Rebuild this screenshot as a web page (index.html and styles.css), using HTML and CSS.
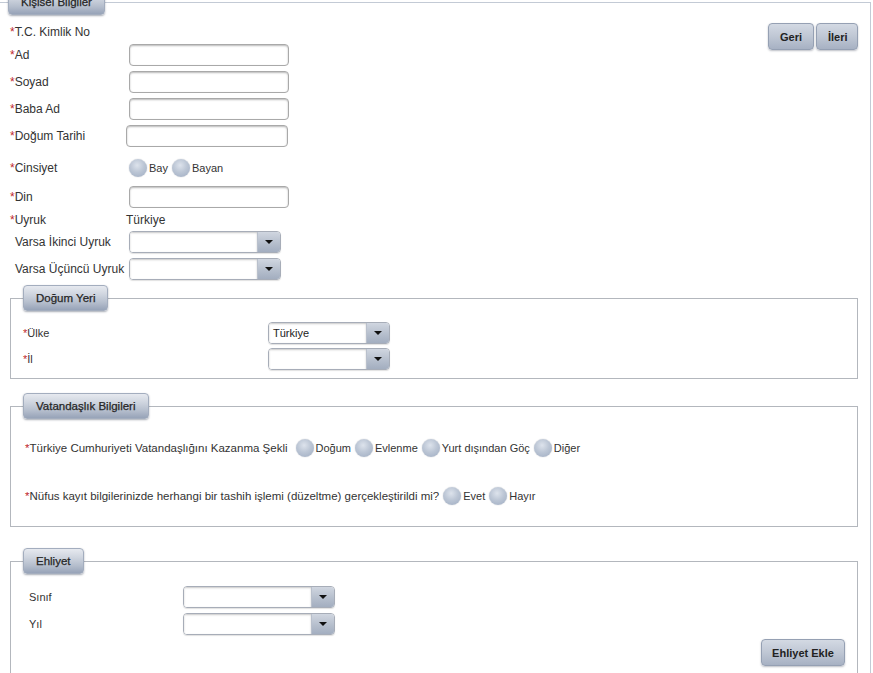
FILE: index.html
```html
<!DOCTYPE html>
<html lang="tr">
<head>
<meta charset="utf-8">
<title>Kişisel Bilgiler</title>
<link rel="stylesheet" href="styles.css">
</head>
<body>
<fieldset class="main">
  <legend class="tab tab-main">Kişisel Bilgiler</legend>
  <div class="top">
    <div class="rows">
      <div class="row r-tc"><span class="lbl"><i>*</i>T.C. Kimlik No</span></div>
      <div class="row"><span class="lbl"><i>*</i>Ad</span><input class="txt" type="text"></div>
      <div class="row"><span class="lbl"><i>*</i>Soyad</span><input class="txt" type="text"></div>
      <div class="row"><span class="lbl"><i>*</i>Baba Ad</span><input class="txt" type="text"></div>
      <div class="row"><span class="lbl"><i>*</i>Doğum Tarihi</span><input class="txt shift wide" type="text"></div>
      <div class="row r-cins"><span class="lbl"><i>*</i>Cinsiyet</span>
        <span class="opts"><span class="radio"></span><span class="opt">Bay</span><span class="radio"></span><span class="opt">Bayan</span></span>
      </div>
      <div class="row"><span class="lbl"><i>*</i>Din</span><input class="txt" type="text"></div>
      <div class="row r-uy"><span class="lbl"><i>*</i>Uyruk</span><span class="val shift">Türkiye</span></div>
      <div class="row"><span class="lbl ind">Varsa İkinci Uyruk</span><div class="sel w152"><div class="sv"></div><div class="sa"><b></b></div></div></div>
      <div class="row"><span class="lbl ind">Varsa Üçüncü Uyruk</span><div class="sel w152"><div class="sv"></div><div class="sa"><b></b></div></div></div>
    </div>
    <div class="nav"><button class="btn">Geri</button><button class="btn">İleri</button></div>
  </div>

  <fieldset class="sub dogum">
    <legend class="tab">Doğum Yeri</legend>
    <div class="srow first"><span class="slbl w245"><i>*</i>Ülke</span><div class="sel w122"><div class="sv">Türkiye</div><div class="sa"><b></b></div></div></div>
    <div class="srow"><span class="slbl w245"><i>*</i>İl</span><div class="sel w122"><div class="sv"></div><div class="sa"><b></b></div></div></div>
  </fieldset>

  <fieldset class="sub vat">
    <legend class="tab">Vatandaşlık Bilgileri</legend>
    <div class="qrow q1"><span class="q"><i>*</i>Türkiye Cumhuriyeti Vatandaşlığını Kazanma Şekli</span>
      <span class="radio"></span><span class="opt">Doğum</span>
      <span class="radio"></span><span class="opt">Evlenme</span>
      <span class="radio"></span><span class="opt">Yurt dışından Göç</span>
      <span class="radio"></span><span class="opt">Diğer</span>
    </div>
    <div class="qrow q2"><span class="q"><i>*</i>Nüfus kayıt bilgilerinizde herhangi bir tashih işlemi (düzeltme) gerçekleştirildi mi?</span>
      <span class="radio"></span><span class="opt">Evet</span>
      <span class="radio"></span><span class="opt">Hayır</span>
    </div>
  </fieldset>

  <fieldset class="sub ehl">
    <legend class="tab">Ehliyet</legend>
    <div class="srow first"><span class="slbl w160 pad6">Sınıf</span><div class="sel w152"><div class="sv"></div><div class="sa"><b></b></div></div></div>
    <div class="srow gap5"><span class="slbl w160 pad6">Yıl</span><div class="sel w152"><div class="sv"></div><div class="sa"><b></b></div></div></div>
    <div class="actions"><button class="btn btn-add">Ehliyet Ekle</button></div>
  </fieldset>
</fieldset>
</body>
</html>
```

FILE: styles.css
```css
html, body {
  margin: 0;
  padding: 0;
  background: #fff;
}
body {
  font-family: "Liberation Sans", Arial, sans-serif;
  font-size: 12px;
  color: #333;
  overflow: hidden;
}
i {
  font-style: normal;
  color: #c0282d;
}

/* outer fieldset */
.main {
  box-sizing: border-box;
  width: 872px;
  margin: -11px 0 0 -1px;
  padding: 0 12px 0 10px;
  border: 1px solid #c3cad5;
  min-inline-size: 0;
}

.tab {
  box-sizing: border-box;
  height: 26px;
  line-height: 25px;
  padding: 0 12px;
  font-size: 11.5px;
  font-weight: normal;
  color: #262626;
  border-radius: 4px;
  border: 1px solid #a3adbe;
  background: linear-gradient(to bottom, #e6e9ef 0%, #cfd5df 35%, #b4bdcc 70%, #97a3b8 100%);
  box-shadow: 0 1px 2px rgba(60, 70, 90, 0.45);
  -webkit-text-stroke: 0.25px #262626;
}
.tab-main {
  margin-left: -2px;
}

.top {
  display: flex;
  justify-content: space-between;
  align-items: flex-start;
}
.rows {
  display: flex;
  flex-direction: column;
  gap: 5px;
  padding-top: 10px;
}
.row {
  display: flex;
  align-items: center;
  height: 22px;
}
.r-tc { height: 14px; }
.r-cins { height: 29px; padding-top: 3px; box-sizing: border-box; }
.r-uy { height: 13px; }
.lbl {
  width: 119px;
  flex: none;
  white-space: nowrap;
}
.lbl.ind { padding-left: 5px; box-sizing: border-box; }
.shift { margin-left: -3px; }

.txt {
  box-sizing: border-box;
  width: 160px;
  height: 22px;
  margin: 0;
  border: 1px solid #a9a9a9;
  border-radius: 4px;
  background: #fff;
  box-shadow: inset 0 1px 2px rgba(0, 0, 0, 0.28);
  padding: 0 4px;
}
.txt.shift { margin-left: -3px; }
.txt.wide { width: 162px; }

.opts {
  display: flex;
  align-items: center;
}
.radio {
  display: inline-block;
  flex: none;
  width: 18px;
  height: 18px;
  border-radius: 50%;
  background: radial-gradient(circle at 45% 35%, #dde3ec 0%, #bcc6d5 45%, #9dabc1 100%);
  box-shadow: 0 0 1px rgba(70, 80, 100, 0.5);
}
.opt {
  font-size: 11px;
  color: #333;
  margin: 0 4px 0 2px;
}

/* select look */
.sel {
  box-sizing: border-box;
  display: flex;
  height: 22px;
  border: 1px solid #a7adb8;
  border-radius: 4px;
  overflow: hidden;
  box-shadow: 0 1px 1px rgba(0, 0, 0, 0.12);
}
.w152 { width: 152px; }
.w122 { width: 122px; }
.sv {
  flex: 1;
  background: #fff;
  box-shadow: inset 0 1px 2px rgba(0, 0, 0, 0.22);
  font-size: 11px;
  line-height: 20px;
  padding-left: 4px;
  color: #222;
}
.sa {
  flex: none;
  width: 22px;
  display: flex;
  align-items: center;
  justify-content: center;
  background: linear-gradient(to bottom, #d0d6e0 0%, #b6bfcd 55%, #a3aec0 100%);
  border-left: 1px solid #b9c0cc;
}
.sa b {
  width: 0;
  height: 0;
  border-left: 4px solid transparent;
  border-right: 4px solid transparent;
  border-top: 4px solid #111;
}

/* nav buttons */
.nav {
  display: flex;
  gap: 2px;
  margin-top: 8px;
}
.btn {
  box-sizing: border-box;
  height: 27px;
  margin: 0;
  padding: 0 11px;
  font-family: "Liberation Sans", Arial, sans-serif;
  font-size: 11px;
  font-weight: bold;
  color: #222;
  border: 1px solid #95a0b3;
  border-radius: 4px;
  background: linear-gradient(to bottom, #d3d9e3 0%, #bfc7d4 50%, #a7b1c3 100%);
  box-shadow: 0 1px 2px rgba(60, 70, 90, 0.35);
}
.nav .btn:first-child { width: 46px; }
.nav .btn:last-child { width: 42px; }

/* sub fieldsets */
.sub {
  margin: 0;
  padding: 0 12px;
  border: 1px solid #b3b7bd;
  min-inline-size: 0;
}
.dogum { margin-top: 5px; padding-bottom: 8px; }
.vat { margin-top: 14px; padding-bottom: 21px; }
.ehl { margin-top: 21px; padding-bottom: 30px; }

.srow {
  display: flex;
  align-items: center;
  height: 22px;
  margin-top: 4px;
  font-size: 11px;
}
.srow.first { margin-top: 11px; }
.ehl .srow.first { margin-top: 12px; }
.srow.gap5 { margin-top: 5px; }
.slbl { flex: none; box-sizing: border-box; }
.w245 { width: 245px; }
.w160 { width: 160px; }
.pad6 { padding-left: 6px; }

.qrow {
  display: flex;
  align-items: center;
  height: 18px;
  font-size: 11px;
  padding-left: 2px;
}
.q { font-size: 11.5px; margin-right: 8px; }
.q1 { margin-top: 20px; }
.q2 { margin-top: 30px; }
.q2 .q { margin-right: 4px; }

.actions {
  display: flex;
  justify-content: flex-end;
  margin-top: 4px;
}
.btn-add { width: 84px; padding: 0; }
```
